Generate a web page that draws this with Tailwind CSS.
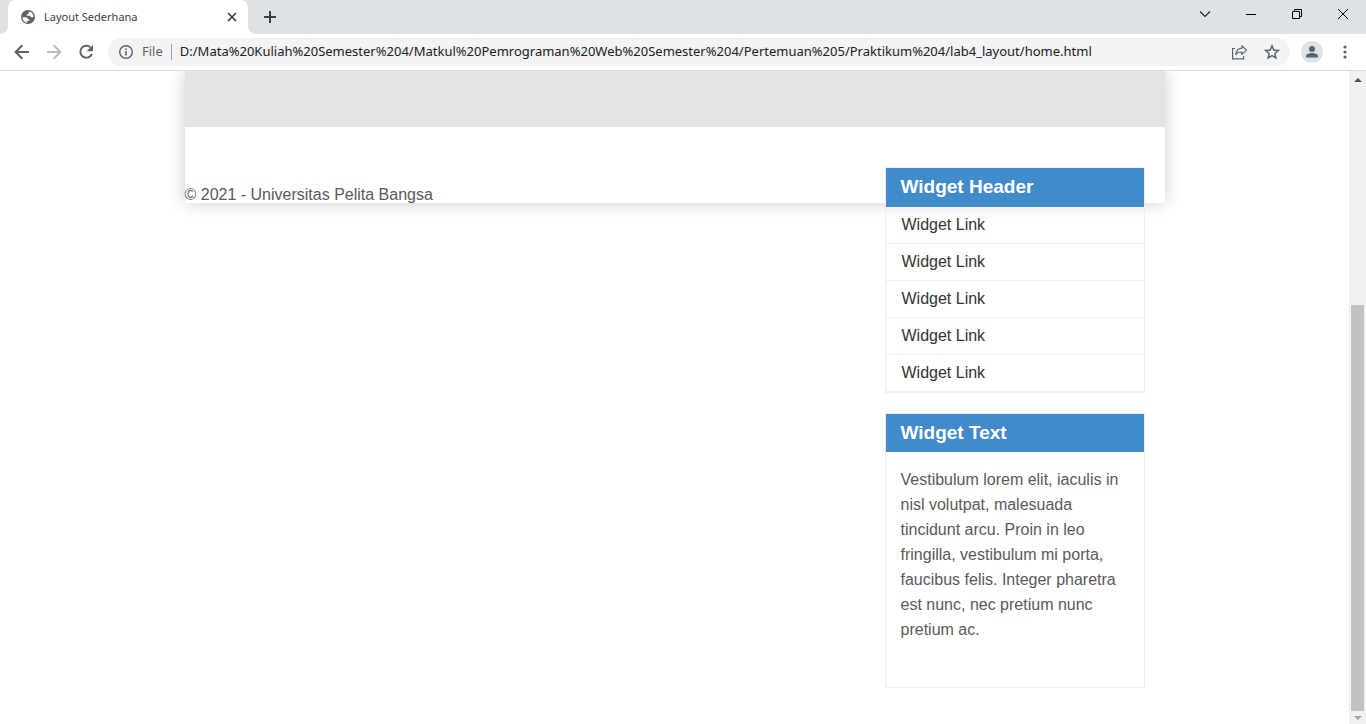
<!DOCTYPE html>
<html lang="id">
<head>
<meta charset="utf-8">
<meta name="viewport" content="width=device-width, initial-scale=1">
<title>Layout Sederhana</title>
<script src="https://cdn.jsdelivr.net/npm/@tailwindcss/browser@4"></script>
</head>
<body class="flex h-screen flex-col overflow-hidden bg-white font-['Liberation_Sans',Arial,sans-serif] text-base text-[#5a5a5a]">

<!-- Tab strip -->
<header class="flex h-[34px] shrink-0 items-stretch bg-[#dee1e6] font-['Noto_Sans',sans-serif]">
  <div class="flex w-2 items-end bg-white"><span class="h-full w-full rounded-br-lg bg-[#dee1e6]"></span></div>
  <div class="flex w-60 items-center rounded-t-lg bg-white pr-2 pl-3">
    <svg class="size-4 shrink-0" viewBox="0 0 16 16" aria-hidden="true">
      <circle cx="8" cy="8" r="7" fill="#5f6368"/>
      <path d="M2.300 8.200h3.100c1.600.1 2.500.9 2.600 2h1.400v1.600H7.200v1.900C4.500 13.400 2.400 11.200 2.300 8.200zM9.400 2.600c2.400.6 4.200 2.700 4.300 5.200-.6.700-1.500.8-2.400.5-.8-.3-.7-1.500-1.600-1.600H7.300c-.6 0-.9-.7-.4-1.200.5-.4 1.500-.2 1.700-.9.200-.7.100-1.500.8-2z" fill="#fff"/>
    </svg>
    <span class="ml-2 flex-1 truncate text-[11px] text-[#3c4043]">Layout Sederhana</span>
    <button type="button" aria-label="Close tab" class="flex size-4 items-center justify-center">
      <svg class="size-4" viewBox="0 0 16 16" fill="none" stroke="#3c4043" stroke-width="1.7"><path d="M4 4l8 8M12 4l-8 8"/></svg>
    </button>
  </div>
  <div class="w-2 bg-white"><span class="block h-full w-full rounded-bl-lg bg-[#dee1e6]"></span></div>
  <button type="button" aria-label="New tab" class="flex w-7 items-center justify-center">
    <svg class="size-4" viewBox="0 0 16 16" fill="none" stroke="#3c4043" stroke-width="2"><path d="M8 2v12M2 8h12"/></svg>
  </button>
  <div class="ml-auto flex h-7 text-black">
    <button type="button" aria-label="Search tabs" class="flex w-[46px] items-center justify-center">
      <svg class="size-4" viewBox="0 0 16 16" fill="none" stroke="#222" stroke-width="1.100"><path d="M3 5.500l5 5 5-5"/></svg>
    </button>
    <button type="button" aria-label="Minimize" class="flex w-[46px] items-center justify-center">
      <svg class="size-4" viewBox="0 0 16 16"><path d="M3 8h10v1H3z"/></svg>
    </button>
    <button type="button" aria-label="Restore" class="flex w-[46px] items-center justify-center">
      <svg class="size-4" viewBox="0 0 16 16" fill="none" stroke="currentColor"><path d="M3.500 5.500h7v7h-7zM5.500 5.500v-2h7v7h-2"/></svg>
    </button>
    <button type="button" aria-label="Close" class="flex w-[46px] items-center justify-center">
      <svg class="size-4" viewBox="0 0 16 16" fill="none" stroke="currentColor" stroke-width="1"><path d="M3 3l10 10M13 3L3 13"/></svg>
    </button>
  </div>
</header>

<!-- Toolbar -->
<nav class="flex h-[37px] shrink-0 items-center border-b border-[#d9dadc] bg-white pr-[11px] pl-3 font-['Noto_Sans',sans-serif]">
  <div class="flex gap-3">
    <button type="button" aria-label="Back" class="size-5"><svg viewBox="0 0 20 20" fill="none" stroke="#5f6368" stroke-width="2"><path d="M17 10H4M10.300 3.300L3.600 10l6.700 6.700"/></svg></button>
    <button type="button" aria-label="Forward" class="size-5"><svg viewBox="0 0 20 20" fill="none" stroke="#babcbe" stroke-width="2"><path d="M3 10h13M9.700 3.300l6.700 6.700-6.700 6.700"/></svg></button>
    <button type="button" aria-label="Reload" class="size-5"><svg viewBox="0 0 20 20"><path d="M14.600 5.400A6 6 0 1 0 15.900 12" fill="none" stroke="#5f6368" stroke-width="2"/><path d="M17 3v6.300h-6.300z" fill="#5f6368"/></svg></button>
  </div>
  <div class="ml-3 flex h-7 flex-1 items-center rounded-full bg-[#f1f3f4] pr-2 pl-2.5">
    <svg class="size-4 shrink-0" viewBox="0 0 16 16" aria-hidden="true"><circle cx="8" cy="8" r="6.300" fill="none" stroke="#5f6368" stroke-width="1.400"/><path d="M7.200 7h1.600v4.500H7.200zM7.200 4.500h1.600V6H7.200z" fill="#5f6368"/></svg>
    <label for="url" class="ml-2 text-[13px] text-[#5f6368]">File</label>
    <span class="ml-2 h-4 w-px bg-[#9aa0a6]"></span>
    <input id="url" type="text" class="ml-2 min-w-0 flex-1 bg-transparent text-[13px] text-[#202124] outline-none" value="D:/Mata%20Kuliah%20Semester%204/Matkul%20Pemrograman%20Web%20Semester%204/Pertemuan%205/Praktikum%204/lab4_layout/home.html">
    <button type="button" aria-label="Share" class="size-5"><svg viewBox="0 0 20 20" fill="none" stroke="#5f6368" stroke-width="1.200"><path d="M5 6.500H2.600v10.300h11v-2.500"/><path d="M11.800 3.800l4.800 4.300-4.800 4.300V10c-2.900 0-4.700.7-6 2.500.4-3.300 2.300-5.900 6-6.300z" stroke-linejoin="round"/></svg></button>
    <button type="button" aria-label="Bookmark this page" class="ml-3 size-5"><svg viewBox="0 0 20 20" fill="none" stroke="#5f6368" stroke-width="1.500"><path d="M10 3.900l1.800 4.200 4.500.4-3.400 3 1 4.500-3.900-2.400L6.100 16l1-4.500-3.400-3 4.500-.4z"/></svg></button>
  </div>
  <button type="button" aria-label="Profile" class="ml-[11px] flex size-[22px] items-center justify-center rounded-full bg-[#dee1e6]">
    <svg class="size-4" viewBox="0 0 16 16" fill="#56607a"><circle cx="8" cy="5" r="3"/><path d="M2 13.500v-1.300C2 10.200 5.500 9 8 9s6 1.200 6 3.200v1.300z"/></svg>
  </button>
  <button type="button" aria-label="Menu" class="ml-3 size-5"><svg viewBox="0 0 20 20" fill="#5f6368"><circle cx="10" cy="5" r="1.600"/><circle cx="10" cy="10" r="1.600"/><circle cx="10" cy="15" r="1.600"/></svg></button>
</nav>

<div class="flex min-h-0 flex-1">
  <!-- Web page -->
  <main class="flex-1 overflow-hidden">
    <div class="mx-auto max-w-[980px] shadow-[0_0_16px_#cccccc]">
      <div class="h-14 bg-[#e4e4e4]"></div>
      <aside class="float-right mt-10 mr-5 w-[260px]">
        <section class="mb-5 border border-[#eeeeee]">
          <h3 class="h-[39px] bg-[#428bca] px-[15px] text-[19px] leading-[38px] font-bold text-white">Widget Header</h3>
          <ul>
            <li class="border-b border-[#eeeeee]"><a href="#" class="block px-4 py-1.5 leading-6 text-[#333333]">Widget Link</a></li>
            <li class="border-b border-[#eeeeee]"><a href="#" class="block px-4 py-1.5 leading-6 text-[#333333]">Widget Link</a></li>
            <li class="border-b border-[#eeeeee]"><a href="#" class="block px-4 py-1.5 leading-6 text-[#333333]">Widget Link</a></li>
            <li class="border-b border-[#eeeeee]"><a href="#" class="block px-4 py-1.5 leading-6 text-[#333333]">Widget Link</a></li>
            <li class="border-b border-[#eeeeee]"><a href="#" class="block px-4 py-1.5 leading-6 text-[#333333]">Widget Link</a></li>
          </ul>
        </section>
        <section class="border border-[#eeeeee]">
          <h3 class="h-[38px] bg-[#428bca] px-[15px] text-[19px] leading-[38px] font-bold text-white">Widget Text</h3>
          <p class="px-[15px] pt-[15px] pb-[45px] leading-[25px]">Vestibulum lorem elit, iaculis in nisl volutpat, malesuada tincidunt arcu. Proin in leo fringilla, vestibulum mi porta, faucibus felis. Integer pharetra est nunc, nec pretium nunc pretium ac.</p>
        </section>
      </aside>
      <footer class="pt-15"><p class="leading-4">© 2021 - Universitas Pelita Bangsa</p></footer>
    </div>
  </main>

  <!-- Scrollbar -->
  <div class="flex w-[17px] flex-col bg-[#f1f1f1]" aria-hidden="true">
    <div class="flex h-[17px] items-center justify-center"><svg class="h-1 w-2" viewBox="0 0 8 4" fill="#505050"><path d="M0 4l4-4 4 4z"/></svg></div>
    <div class="flex-[217]"></div>
    <div class="mx-0.5 flex-[406] bg-[#c1c1c1]"></div>
    <div class="flex h-[13px] items-center justify-center"><svg class="h-1 w-2" viewBox="0 0 8 4" fill="#a3a3a3"><path d="M0 0l4 4 4-4z"/></svg></div>
  </div>
</div>
</body>
</html>
